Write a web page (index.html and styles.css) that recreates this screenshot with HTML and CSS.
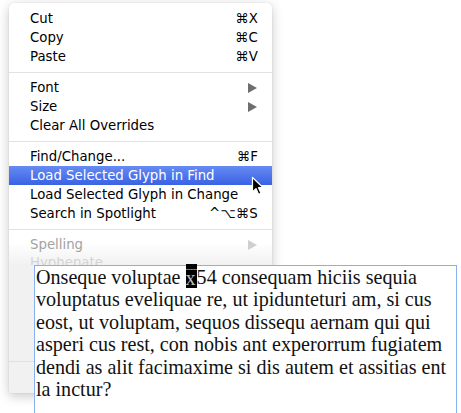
FILE: index.html
```html
<!DOCTYPE html>
<html>
<head>
<meta charset="utf-8">
<link rel="stylesheet" href="styles.css">
</head>
<body>
<div class="canvas">
  <div class="menu">
    <div class="item"><span>Cut</span><span class="key">⌘X</span></div>
    <div class="item"><span>Copy</span><span class="key">⌘C</span></div>
    <div class="item"><span>Paste</span><span class="key">⌘V</span></div>
    <div class="sep"></div>
    <div class="item"><span>Font</span><span class="arrow"></span></div>
    <div class="item"><span>Size</span><span class="arrow"></span></div>
    <div class="item"><span>Clear All Overrides</span></div>
    <div class="sep"></div>
    <div class="item"><span>Find/Change...</span><span class="key">⌘F</span></div>
    <div class="item active"><span>Load Selected Glyph in Find</span></div>
    <div class="item"><span>Load Selected Glyph in Change</span></div>
    <div class="item"><span>Search in Spotlight</span><span class="key">^⌥⌘S</span></div>
    <div class="sep"></div>
    <div class="item disabled"><span>Spelling</span><span class="arrow"></span></div>
    <div class="item faded"><span>Hyphenate</span></div>
    <div class="fadeout"></div>
  </div>

  <svg class="pointer" width="14" height="20" viewBox="0 0 14 20">
    <path d="M1.5 1.5 L1.5 16 L5 12.6 L7.6 18.4 L10 17.3 L7.5 11.7 L12.2 11.7 Z" fill="#000" stroke="#fff" stroke-width="1.2" stroke-linejoin="round"/>
  </svg>

  <div class="frame">
    <div class="line">Onseque voluptae <span class="sel">x</span>54 consequam hiciis sequia</div>
    <div class="line">voluptatus eveliquae re, ut ipidunteturi am, si cus</div>
    <div class="line">eost, ut voluptam, sequos dissequ aernam qui qui</div>
    <div class="line">asperi cus rest, con nobis ant experorrum fugiatem</div>
    <div class="line">dendi as alit facimaxime si dis autem et assitias ent</div>
    <div class="line">la inctur?</div>
  </div>
</div>
</body>
</html>
```

FILE: styles.css
```css
html, body {
  margin: 0;
  padding: 0;
  background: #fff;
}
.canvas {
  position: relative;
  width: 461px;
  height: 413px;
  overflow: hidden;
}
.menu {
  position: relative;
  margin: 3px 0 0 9px;
  width: 263px;
  height: 390px;
  padding-top: 6px;
  box-sizing: border-box;
  background: linear-gradient(#ffffff 0, #ffffff 240px, #f1f1f1 262px, #f1f1f1 100%);
  border-radius: 5px 5px 0 0;
  box-shadow: 0 3px 12px rgba(0,0,0,0.22), 0 0 1px rgba(0,0,0,0.25);
  font-family: "DejaVu Sans", sans-serif;
  font-size: 13.3px;
  color: #000;
}
.item {
  display: flex;
  justify-content: space-between;
  align-items: center;
  height: 19px;
  padding: 0 14px 0 21px;
}
.item.active {
  background: linear-gradient(#668bf2, #3a62e4);
  color: #fff;
}
.item.disabled {
  color: #a3a3a3;
}
.item.faded {
  color: #d4d4d4;
  height: 8px;
  align-items: flex-start;
  overflow: hidden;
  line-height: 12px;
  margin-top: 3px;
}
.key {
  letter-spacing: 0.2px;
}
.arrow {
  width: 0;
  height: 0;
  margin-right: 1px;
  border-top: 5px solid transparent;
  border-bottom: 5px solid transparent;
  border-left: 9px solid #6e6e6e;
}
.disabled .arrow {
  border-left-color: #cfcfcf;
}
.sep {
  height: 12px;
  display: flex;
  align-items: center;
}
.sep::before {
  content: "";
  flex: 1;
  height: 1px;
  background: #e2e2e2;
}
.fadeout {
  position: absolute;
  left: 0;
  right: 0;
  top: 358px;
  height: 1px;
  background: #e0e0e0;
}
.pointer {
  position: absolute;
  left: 251px;
  top: 176px;
}
.frame {
  position: absolute;
  left: 34px;
  top: 265px;
  width: 423px;
  height: 160px;
  background: #fff;
  border: 1px solid #86b1ee;
  box-sizing: border-box;
  padding: 0 0 0 1px;
  font-family: "Liberation Serif", serif;
  font-size: 20.1px;
  line-height: 22.4px;
  color: #111;
}
.line {
  white-space: nowrap;
}
.sel {
  display: inline-block;
  background: linear-gradient(#000 0, #000 5px, #c2661a 5px, #c2661a 6px, #000 6px);
  color: #bdbdbd;
  line-height: 19px;
  padding: 5px 1px 0 0;
  margin-top: -6px;
  vertical-align: -1px;
}
```
